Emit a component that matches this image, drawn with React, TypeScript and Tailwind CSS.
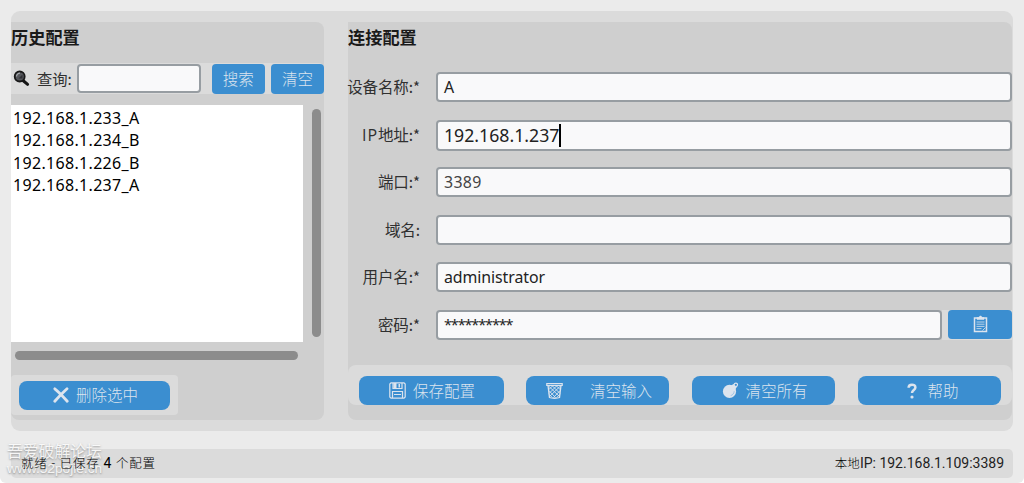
import type { ReactNode } from "react";

const cjk = "font-['Noto_Sans','Noto_Sans_CJK_SC',sans-serif]";
const cjkLight = "font-['Noto_Sans_CJK_SC',sans-serif] font-light";

const history = ["192.168.1.233_A", "192.168.1.234_B", "192.168.1.226_B", "192.168.1.237_A"];

function Magnifier() {
  return (
    <svg width="17" height="17" viewBox="0 0 17 17">
      <path d="M10 10.5l4.6 3.9" stroke="#151515" strokeWidth="3" strokeLinecap="round" />
      <circle cx="6.7" cy="6.5" r="5" fill="#54565b" stroke="#181818" strokeWidth="1.8" />
      <path d="M3.5 6.5A3.4 3.4 0 0 1 7 3.2" stroke="#a5a8ad" strokeWidth="1.2" fill="none" />
      <path d="M5.5 8.5l4-4v4z" fill="#303136" />
    </svg>
  );
}

function Cross() {
  return (
    <svg width="16" height="16" viewBox="0 0 16 16" fill="none" stroke="#dce4ee" strokeWidth="2.8" strokeLinecap="round">
      <path d="M1.8 1.8C6 5 10 9.500 14.200 14.200M14 1.800C10 5.500 5.500 10 1.800 14.200" />
    </svg>
  );
}

function Floppy() {
  return (
    <svg width="17" height="17" viewBox="0 0 17 17" fill="none" stroke="#dce4ee" strokeWidth="1.2">
      <path d="M2 .8h13l1.200 1.200v13l-1.200 1.200H2L.8 15V2z" />
      <path d="M4 1v5.500h9V1M3.500 16V9.500h10v6.500M5 12.500h7" />
      <path d="M4.500 1h3v5h-3zM9.500 2h1.500v3.500h-1.500z" fill="#dce4ee" stroke="none" />
    </svg>
  );
}

function Basket() {
  return (
    <svg width="17" height="17" viewBox="0 0 17 17" fill="none" stroke="#dce4ee">
      <path d="M.8 1.500h15.400v1.800H.8z" strokeWidth="1.200" />
      <path d="M2 3.500l1.500 12c2 1 8 1 10 0l1.500-12" strokeWidth="1.300" />
      <path d="M2 3.500l11.500 11M6 3.500l8 8M10 3.500l4.500 4.300M2.800 8.500l6.700 7M3.300 12.500l3 3M15 3.500l-11.500 11M11 3.500l-8 8M7 3.500L2.500 7.800M14.200 8.500l-6.700 7M13.700 12.500l-3 3" strokeWidth=".9" />
    </svg>
  );
}

function Bomb() {
  return (
    <svg width="17" height="17" viewBox="0 0 17 17" fill="none">
      <circle cx="7.500" cy="9.400" r="6.600" fill="#dce4ee" />
      <path d="M9 3.500l2.600-1.600 3.200 3-1.600 2.600z" fill="#dce4ee" />
      <path d="M12 2.800c.4-2.300 3.500-2.200 3.500-.2 0 1-.6 1.500-1.200 2.400" stroke="#dce4ee" strokeWidth="1.200" />
      <path d="M12.200 9.200c-.2 2.300-1.500 3.800-3.500 4.400" stroke="#9bbfe2" strokeWidth=".9" />
    </svg>
  );
}

function Question() {
  return (
    <svg width="10" height="16" viewBox="0 0 10 16" fill="none">
      <path d="M1.600 4.700C1.600.700 8.400.700 8.400 4.400c0 2.600-3.400 2.600-3.400 5.700" stroke="#dce4ee" strokeWidth="2.500" />
      <circle cx="5" cy="14" r="1.600" fill="#dce4ee" />
    </svg>
  );
}

function Clipboard() {
  return (
    <svg width="15" height="18" viewBox="0 0 15 18" fill="none" stroke="#dce4ee">
      <path d="M1.500 3h12v13.500h-12z" strokeWidth="1.500" />
      <path d="M4 4.500V2.500h2C6.200.500 8.800.500 9 2.500h2v2z" fill="#dce4ee" strokeWidth=".5" />
      <path d="M3.500 7h8M3.500 9.200h8M3.500 11.400h8M3.500 13.600h5M9.500 15.500l3-3" strokeWidth=".8" />
    </svg>
  );
}

function Field({ label, value, tall, required = true, children }: { label: ReactNode; value?: ReactNode; tall?: boolean; required?: boolean; children?: ReactNode }) {
  return (
    <div className="flex h-[47.500px] items-start">
      <label className="mt-[2px] flex w-[72px] shrink-0 justify-end font-['Noto_Sans_CJK_SC',sans-serif] text-[15.500px] leading-[24px] whitespace-nowrap text-[#303030]">
        <span className="tracking-[-0.100px]">{label}:</span>
        {required && <span className="pt-px text-[15px]">*</span>}
      </label>
      <div className={`${cjk} ml-4 flex min-w-0 flex-1 items-center rounded-[4px] border-2 border-[#979da2] bg-[#f9f9fa] pl-[6px] text-[#222] ${tall ? "h-[31px] text-[17.700px]" : "h-[30px] pt-px text-[15.900px]"}`}>
        {value}
      </div>
      {children}
    </div>
  );
}

function Action({ icon, label, className }: { icon: ReactNode; label: string; className: string }) {
  return (
    <button className={`flex h-[29px] items-center justify-center rounded-[8px] bg-[#3b8ed0] text-[15.500px] leading-none text-[#dce4ee] ${cjkLight} ${className}`}>
      {icon}
      <span className="whitespace-nowrap">{label}</span>
    </button>
  );
}

export default function App() {
  return (
    <div className="relative h-[483px] w-[1024px] overflow-hidden rounded-b-[6px] bg-[#ebebeb] pt-[11px] pl-[11px]">
      <main className="flex h-[420px] w-[1002px] rounded-[9px] bg-[#dbdbdb] pt-[11px]">
        <section className="flex h-[398px] w-[313px] flex-col rounded-r-[8px] rounded-bl-[8px] bg-[#cfcfcf]">
          <h2 className={`${cjk} h-[41px] pt-1 text-[17.200px] leading-[24px] font-bold text-[#1a1a1a]`}>历史配置</h2>
          <div className="flex h-[31px] items-center rounded-r-[5px] bg-[#dbdbdb]">
            <div className="ml-[2px] w-[24px]"><Magnifier /></div>
            <span className="w-[39.500px] pb-px font-['Noto_Sans_CJK_SC',sans-serif] text-[15.300px] whitespace-nowrap text-[#303030]">查询:</span>
            <div className="h-[29px] w-[124px] rounded-[4px] border-2 border-[#979da2] bg-[#f9f9fa]" />
            <button className={`${cjkLight} ml-[11px] h-[30px] w-[53.500px] rounded-[4px] bg-[#3b8ed0] text-[15.500px] leading-none text-[#dce4ee]`}>搜索</button>
            <button className={`${cjkLight} ml-[6px] h-[30px] w-[53px] rounded-[4px] bg-[#3b8ed0] text-[15.500px] leading-none text-[#dce4ee]`}>清空</button>
          </div>
          <div className="mt-[11px] flex h-[237px]">
            <ul className={`${cjk} w-[292px] bg-white pt-[2px] pl-[2px] text-[16px] leading-[22.400px] tracking-[0.320px] text-black`}>
              {history.map((item) => <li key={item}>{item}</li>)}
            </ul>
            <div className="mt-[4px] ml-[9px] h-[228px] w-[9px] rounded-full bg-[#8c8c8c]" />
          </div>
          <div className="mt-[9px] ml-[4px] h-[9px] w-[283px] rounded-full bg-[#8c8c8c]" />
          <div className="mt-[15px] flex h-[40px] w-[167px] items-center rounded-[4px] bg-[#dbdbdb] pl-[8px]">
            <Action className="w-[151px] gap-[7px] pl-[2px]" icon={<Cross />} label="删除选中" />
          </div>
        </section>

        <section className="ml-[24px] flex h-[398px] w-[664px] flex-col rounded-r-[8px] rounded-bl-[8px] bg-[#cfcfcf]">
          <h2 className={`${cjk} h-[50px] pt-1 text-[17.200px] leading-[24px] font-bold text-[#1a1a1a]`}>连接配置</h2>
          <div className="h-[293px]">
            <Field label="设备名称" value="A" />
            <Field
              tall
              label={<><span className="font-['Open_Sans',sans-serif] text-[16px] tracking-[0.900px]">IP</span>地址</>}
              value={<><span>192.168.1.237</span><i className="h-[23px] w-[2px] bg-black" /></>}
            />
            <Field label="端口" value={<span className="tracking-[0.300px] text-[#444]">3389</span>} />
            <Field label="域名" required={false} />
            <Field label="用户名" value={<span className="tracking-[-0.080px]">administrator</span>} />
            <Field label="密码" value={<span className="text-[14.500px] tracking-[-1.150px]">**********</span>}>
              <div className="flex h-[30px] bg-[#dbdbdb] pl-[6px]">
                <button className="flex h-[29px] w-[64px] items-center justify-center rounded-[4px] bg-[#3b8ed0]">
                  <Clipboard />
                </button>
              </div>
            </Field>
          </div>
          <div className="flex h-[40px] items-end rounded-[8px] bg-[#dbdbdb] pl-[11px]">
            <Action className="w-[145px] gap-[7px] pl-[1px]" icon={<Floppy />} label="保存配置" />
            <Action className="ml-[22px] w-[143px] gap-[27px] pl-[3px]" icon={<Basket />} label="清空输入" />
            <Action className="ml-[23px] w-[143px] gap-[6px] pl-[3px]" icon={<Bomb />} label="清空所有" />
            <Action className="ml-[23px] w-[143px] gap-[10px] pl-[7px]" icon={<Question />} label="帮助" />
          </div>
        </section>
      </main>

      <footer className="mt-[18px] h-[29px] w-[1002px] rounded-[5px] bg-[#dbdbdb] font-['Roboto','Noto_Sans_CJK_SC',sans-serif] text-[#222]">
        <div className="relative z-10 flex h-full items-center justify-between pr-[9px] pl-[10px]">
          <span className="text-[12.500px] font-light tracking-[0.800px] whitespace-pre text-black">就绪 - 已保存 <span className="text-[14px] font-normal">4</span> 个配置</span>
          <span className="text-[14px] whitespace-nowrap"><span className="text-[12.500px] font-light text-black">本地</span>IP: 192.168.1.109:3389</span>
        </div>
      </footer>

      <div className="pointer-events-none absolute top-[440px] left-[7px] whitespace-nowrap text-white/85 [text-shadow:0_1px_2px_rgba(90,90,90,0.6)]">
        <div className="font-['Noto_Sans_CJK_SC',sans-serif] text-[15.800px] leading-[22px]">吾爱破解论坛</div>
        <div className="font-['Liberation_Sans',sans-serif] text-[13.700px] leading-[13px]">www.52pojie.cn</div>
      </div>
    </div>
  );
}
